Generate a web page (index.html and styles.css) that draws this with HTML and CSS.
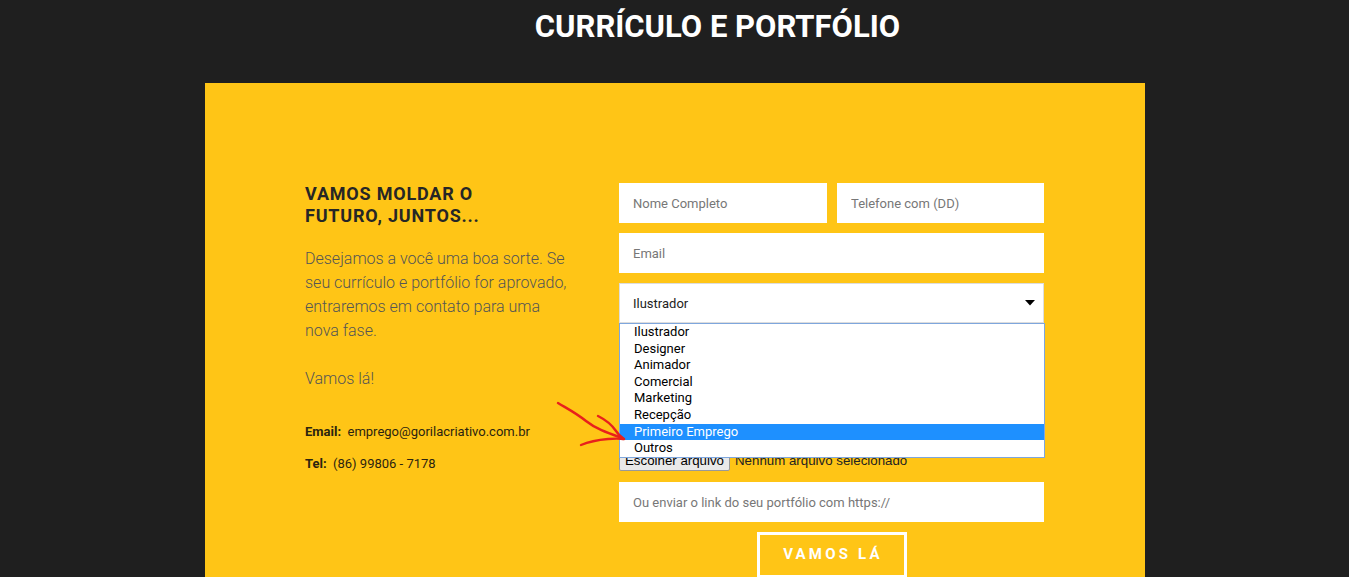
FILE: index.html
```html
<!DOCTYPE html>
<html lang="pt-BR">
<head>
  <meta charset="UTF-8">
  <meta name="viewport" content="width=device-width, initial-scale=1.0">
  <title>Currículo e Portfólio</title>
  <link rel="stylesheet" href="styles.css">
</head>
<body>
  <h1 class="page-title">CURRÍCULO E PORTFÓLIO</h1>

  <section class="card">
    <div class="intro">
      <h2>VAMOS MOLDAR O FUTURO, JUNTOS...</h2>
      <p class="lead">Desejamos a você uma boa sorte. Se seu currículo e portfólio for aprovado, entraremos em contato para uma nova fase.<br><br>Vamos lá!</p>
      <p class="contact"><strong>Email:</strong>&nbsp; emprego@gorilacriativo.com.br</p>
      <p class="contact"><strong>Tel:</strong>&nbsp; (86) 99806 - 7178</p>
    </div>

    <form class="form">
      <div class="row">
        <input type="text" placeholder="Nome Completo">
        <input type="text" placeholder="Telefone com (DD)">
      </div>
      <input type="text" placeholder="Email">

      <div class="select-wrap">
        <div class="select">
          <span>Ilustrador</span>
          <svg width="10" height="6" viewBox="0 0 10 6"><path d="M0 0h10L5 5.5z" fill="#000"/></svg>
        </div>
        <ul class="options">
          <li>Ilustrador</li>
          <li>Designer</li>
          <li>Animador</li>
          <li>Comercial</li>
          <li>Marketing</li>
          <li>Recepção</li>
          <li class="active">Primeiro Emprego</li>
          <li>Outros</li>
        </ul>
        <svg class="scribble" width="80" height="50" viewBox="0 0 80 50">
          <path d="M2 2 C 12 8, 20 12, 30 20 S 52 32, 66 37" />
          <path d="M42 15 C 50 19, 56 24, 60 30 S 66 36, 68 38" />
          <path d="M25 44 C 32 41, 40 39, 52 38 S 64 38, 68 38" />
        </svg>
      </div>

      <div class="file">
        <button type="button">Escolher arquivo</button>
        <span>Nenhum arquivo selecionado</span>
      </div>

      <input type="text" placeholder="Ou enviar o link do seu portfólio com https://">

      <div class="actions">
        <button type="button" class="submit">VAMOS LÁ</button>
      </div>
    </form>
  </section>
</body>
</html>
```

FILE: styles.css
```css
body {
  margin: 0;
  background: #1f1f1f;
  font-family: Roboto, "Liberation Sans", sans-serif;
  height: 577px;
  overflow: hidden;
}
.page-title {
  margin: 0;
  padding-top: 9px;
  height: 83px;
  box-sizing: border-box;
  text-align: center;
  color: #fff;
  font-size: 31px;
  font-weight: 700;
  line-height: 36px;
  padding-left: 86px;
}
.card {
  width: 940px;
  margin-left: 205px;
  background: #ffc516;
  box-sizing: border-box;
  padding: 100px 101px 40px 100px;
  display: grid;
  grid-template-columns: 270px 425px;
  column-gap: 44px;
  min-height: 520px;
}
.intro h2 {
  margin: 0;
  max-width: 210px;
  font-size: 18px;
  line-height: 22px;
  font-weight: 700;
  letter-spacing: 0.8px;
  color: #262626;
}
.lead {
  margin: 20px 0 0;
  font-size: 16px;
  font-weight: 300;
  line-height: 24px;
  color: #555;
}
.contact {
  margin: 0;
  font-size: 13px;
  line-height: 20px;
  color: #2b2410;
}
.lead + .contact {
  margin-top: 31px;
}
.contact + .contact {
  margin-top: 12px;
}
.form {
  display: flex;
  flex-direction: column;
  gap: 10px;
}
.row {
  display: grid;
  grid-template-columns: 208px 207px;
  column-gap: 10px;
}
input {
  height: 40px;
  border: none;
  background: #fff;
  padding: 0 14px;
  box-sizing: border-box;
  font-family: inherit;
  font-size: 13px;
  color: #333;
  width: 100%;
}
input::placeholder {
  color: #777;
}
.select-wrap {
  position: relative;
  height: 157px;
}
.select {
  height: 40px;
  background: #fff;
  border: 1px solid #ddd;
  box-sizing: border-box;
  padding: 0 8px 0 13px;
  display: flex;
  align-items: center;
  justify-content: space-between;
  font-size: 13px;
  color: #222;
}
.options {
  position: absolute;
  top: 40px;
  left: 0;
  width: 426px;
  margin: 0;
  padding: 0;
  list-style: none;
  background: #fff;
  border: 1px solid #7ea6dd;
  box-sizing: border-box;
  height: 135px;
  z-index: 2;
  font-size: 13px;
  color: #000;
}
.options li {
  height: 16.6px;
  line-height: 16.6px;
  padding-left: 14px;
}
.options .active {
  background: #1e90ff;
  color: #fff;
}
.scribble {
  position: absolute;
  left: -63px;
  top: 118px;
  z-index: 3;
  overflow: visible;
}
.scribble path {
  fill: none;
  stroke: #e8201c;
  stroke-width: 2.4;
  stroke-linecap: round;
}
.file {
  display: flex;
  align-items: center;
  gap: 5px;
  height: 22px;
  margin: -1px 0 1px;
  font-family: "Liberation Sans", Arial, sans-serif;
  font-size: 13.3px;
  color: #222;
}
.file button {
  height: 22px;
  width: 111px;
  padding: 0;
  font: inherit;
  color: #000;
  background: #e9e9e9;
  border: 1px solid #999;
  border-radius: 2px;
}
.actions {
  display: flex;
  justify-content: center;
}
.submit {
  width: 150px;
  height: 46px;
  background: transparent;
  border: 3px solid #fff;
  color: #fff;
  font-family: inherit;
  font-size: 15px;
  font-weight: 700;
  letter-spacing: 3.2px;
  padding: 0 0 2px 3px;
}
```
